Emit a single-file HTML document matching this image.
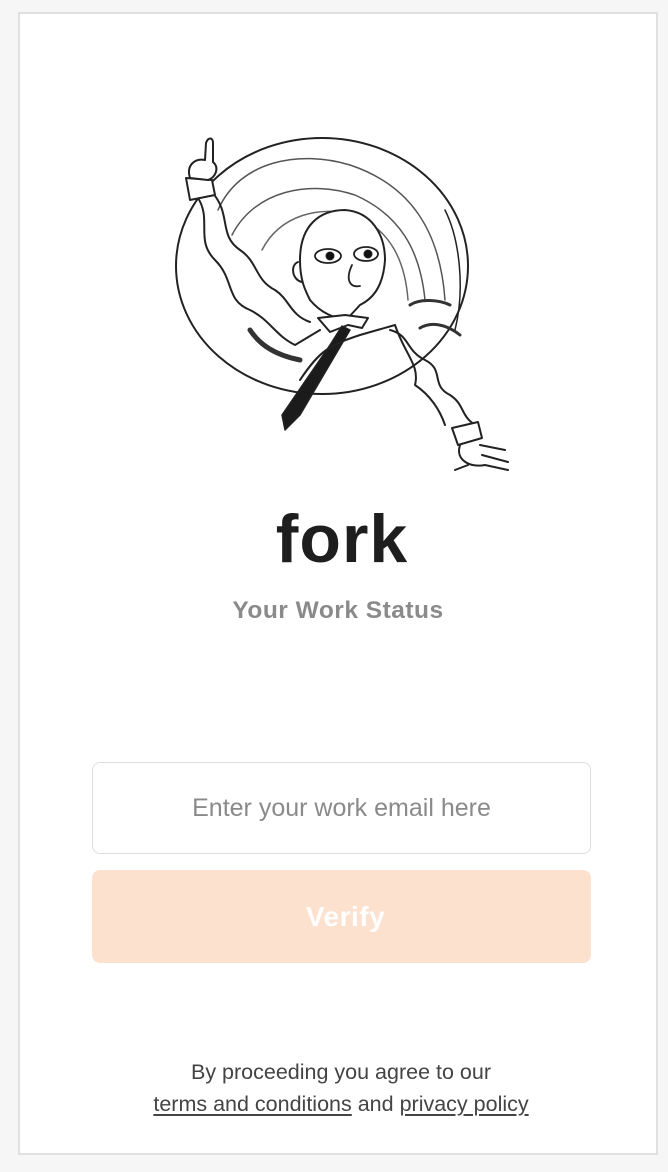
<!DOCTYPE html>
<html><head><meta charset="utf-8"><style>
html,body{margin:0;padding:0;background:#f6f6f6;}
body{width:668px;height:1172px;position:relative;font-family:"Liberation Sans",sans-serif;overflow:hidden;}
.card{position:absolute;left:18px;top:12px;width:640px;height:1143px;background:#fff;border:2px solid #e0e0e0;box-sizing:border-box;}
.abs{position:absolute;}
.fork{left:8px;width:668px;top:500px;text-align:center;font-size:68px;font-weight:bold;color:#1e1e1e;letter-spacing:1px;}
.sub{left:0;width:676px;top:597px;text-align:center;font-size:24.5px;font-weight:bold;color:#8a8a8a;letter-spacing:0.5px;}
.input{left:92px;top:762px;width:499px;height:92px;border:1px solid #dedede;border-radius:8px;box-sizing:border-box;text-align:center;line-height:90px;font-size:25px;color:#8a8a8a;}
.btn{left:92px;top:870px;width:499px;height:93px;background:#fde1cf;border-radius:8px;text-align:center;line-height:93px;font-size:28px;font-weight:bold;color:#fff;letter-spacing:0.5px;padding-left:8px;box-sizing:border-box;}
.foot{left:0;width:682px;top:1056px;text-align:center;font-size:21.5px;color:#444;line-height:32px;}
.foot u{text-decoration:underline;text-underline-offset:3px;}
</style></head><body>
<div class="card"></div>
<svg class="abs" style="left:0;top:0" width="668" height="500" viewBox="0 0 668 500" fill="none" stroke="#222" stroke-linecap="round" stroke-linejoin="round">
 <ellipse cx="322" cy="266" rx="146" ry="128" stroke-width="2"/>
 <path d="M218 210 C240 160 300 150 350 165 C410 185 440 230 445 300" stroke-width="1.5" stroke="#555"/>
 <path d="M232 235 C255 190 310 180 355 195 C400 215 420 250 425 300" stroke-width="1.5" stroke="#555"/>
 <path d="M262 250 C280 215 320 205 355 215 C390 230 405 260 408 300" stroke-width="1.5" stroke="#666"/>
 <path d="M455 330 C465 290 460 240 445 210" stroke-width="1.5"/>
 <path d="M300 260 C300 225 320 210 345 210 C372 212 385 235 385 260 C383 290 370 300 360 305 L348 318 C335 320 320 312 310 300 C305 290 300 280 300 260Z" stroke-width="2" fill="#fff"/>
 <ellipse cx="328" cy="256" rx="13" ry="7" stroke-width="1.8"/>
 <ellipse cx="366" cy="254" rx="12" ry="7" stroke-width="1.8"/>
 <circle cx="330" cy="256" r="4" fill="#111"/>
 <circle cx="368" cy="254" r="4" fill="#111"/>
 <path d="M352 265 C345 280 350 288 360 286" stroke-width="1.8"/>
 <path d="M298 262 C290 265 292 280 302 282" stroke-width="2"/>
 <path d="M318 318 L330 332 L348 325 L362 328 L368 318 L345 315Z" stroke-width="2" fill="#fff"/>
 <path d="M342 326 L350 330 L300 415 L285 430 L282 415 L330 345Z" fill="#1b1b1b" stroke-width="1.5"/>
 <path d="M198 198 C212 220 195 240 215 260 C235 280 225 300 250 310 C270 320 275 335 295 345 L320 330" stroke-width="2"/>
 <path d="M212 192 C232 215 218 235 240 250 C258 262 255 280 275 290 C290 300 290 315 310 322" stroke-width="2"/>
 <path d="M186 178 L190 200 L215 195 L212 180Z" stroke-width="2" fill="#fff"/>
 <path d="M190 178 C186 165 195 158 205 160 L206 143 C208 137 213 137 213 143 L213 162 C220 168 215 178 208 180Z" stroke-width="2" fill="#fff"/>
 <path d="M300 380 C320 350 330 345 360 335 L395 325 C405 355 420 365 415 385 C430 395 440 410 445 425" stroke-width="2"/>
 <path d="M390 330 C410 335 405 350 425 360 C445 370 430 385 450 395 C465 405 460 415 475 425" stroke-width="2"/>
 <path d="M452 428 L458 445 L482 438 L478 422Z" stroke-width="2" fill="#fff"/>
 <path d="M460 445 C455 460 470 468 485 465 L508 470 M480 445 L505 450 M482 455 L508 462 M468 465 L455 470" stroke-width="2"/>
 <path d="M410 305 C420 298 440 300 450 305" stroke-width="3" stroke="#333"/>
 <path d="M420 328 C430 322 445 323 460 335" stroke-width="3" stroke="#333"/>
 <path d="M250 330 C260 345 275 355 300 360" stroke-width="5" stroke="#333"/>
</svg>
<div class="abs fork">fork</div>
<div class="abs sub">Your Work Status</div>
<div class="abs input">Enter your work email here</div>
<div class="abs btn">Verify</div>
<div class="abs foot">By proceeding you agree to our<br><u>terms and conditions</u> and <u>privacy policy</u></div>
</body></html>
